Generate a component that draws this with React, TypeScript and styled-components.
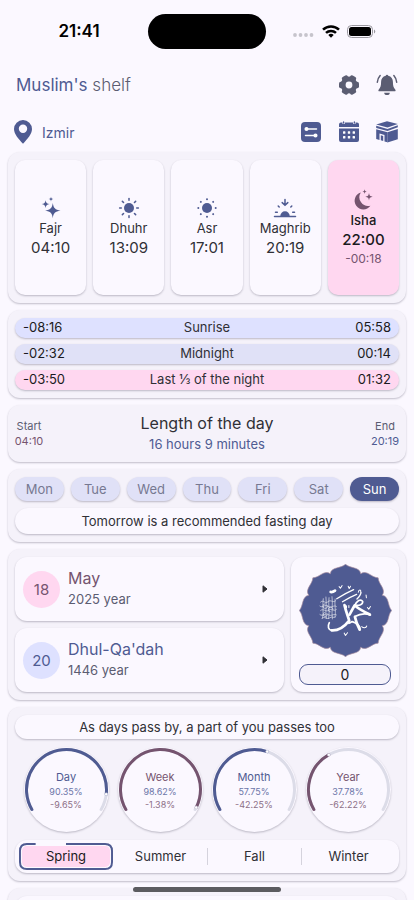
import React, { useState } from "react";
import styled, { createGlobalStyle, css } from "styled-components";

const color = {
  page: "#fbf8ff",
  panel: "#f5f2fa",
  card: "#fbf8ff",
  indigo: "#4f5b92",
  plum: "#75546f",
  lilac: "#dee1ff",
  mist: "#e0e1f7",
  pink: "#ffd7f0",
  ink: "#303036",
  slate: "#5b5d72",
  track: "#dcdce8",
};

const GlobalStyle = createGlobalStyle`
  * { box-sizing: border-box; }
  body {
    margin: 0;
    background: ${color.page};
    color: ${color.ink};
    font-family: Inter, "Open Sans", "Liberation Sans", sans-serif;
  }
  button { font: inherit; color: inherit; border: 0; background: none; padding: 0; cursor: pointer; }
  h1, h2, p, ul { margin: 0; padding: 0; font-weight: 400; }
  ul { list-style: none; }
  svg { display: block; }
`;

const Screen = styled.div`
  height: 100vh;
  overflow: hidden;
  display: flex;
  flex-direction: column;
`;

const StatusBar = styled.header`
  flex: none;
  display: grid;
  grid-template-columns: 1fr 118px 1fr;
  align-items: center;
  height: 62px;
`;

const Clock = styled.time`
  justify-self: center;
  padding-left: 10px;
  color: #000;
  font-size: 17px;
  font-weight: 600;
`;

const Island = styled.div`
  height: 35px;
  border-radius: 18px;
  background: #000;
`;

const Signals = styled.div`
  display: flex;
  justify-content: flex-end;
  align-items: center;
  gap: 7px;
  padding-right: 38px;
`;

const Heading = styled.div<{ $place?: boolean }>`
  flex: none;
  display: flex;
  align-items: center;
  justify-content: space-between;
  height: ${(p) => (p.$place ? 44 : 46)}px;
  padding: ${(p) => (p.$place ? 4 : 0)}px 15px 0 16px;
`;

const Brand = styled.h1`
  font-size: 17px;
  line-height: 24px;
  color: ${color.slate};
  font-weight: 300;

  strong { color: ${color.indigo}; font-weight: 400; }
`;

const City = styled.button`
  display: flex;
  align-items: center;
  gap: 10px;
  margin-left: -2px;
  color: ${color.indigo};
  font-size: 14px;
`;

const Actions = styled.div`
  display: flex;
  gap: 14px;
`;

const IconButton = styled.button<{ $muted?: boolean }>`
  width: 24px;
  height: 24px;
  color: ${(p) => (p.$muted ? color.slate : color.indigo)};
`;

const Panels = styled.main`
  flex: none;
  display: flex;
  flex-direction: column;
  gap: 7px;
  padding: 0 8px;
`;

const raised = css`
  box-shadow: 0 1px 2px rgba(40, 36, 60, 0.28);
`;

const Panel = styled.section<{ $tight?: boolean }>`
  display: flex;
  flex-direction: column;
  gap: ${(p) => (p.$tight ? 6 : 7)}px;
  padding: 8px 7px;
  border-radius: 12px;
  background: ${color.panel};
  ${raised}
`;

const PrayerList = styled.ul`
  display: grid;
  grid-template-columns: repeat(5, 1fr);
  gap: 7px;
`;

const PrayerCard = styled.li<{ $active?: boolean }>`
  display: flex;
  flex-direction: column;
  align-items: center;
  justify-content: center;
  height: 135px;
  border-radius: 10px;
  background: ${(p) => (p.$active ? color.pink : color.card)};
  color: ${(p) => (p.$active ? "#1b1b21" : color.ink)};
  ${raised}

  svg { color: ${(p) => (p.$active ? color.plum : color.indigo)}; }
`;

const PrayerName = styled.span<{ $active?: boolean }>`
  font-size: 13px;
  line-height: 17px;
  font-weight: ${(p) => (p.$active ? 500 : 400)};
`;

const PrayerTime = styled.time<{ $active?: boolean }>`
  font-size: 15px;
  line-height: 22px;
  font-weight: ${(p) => (p.$active ? 500 : 400)};
`;

const Countdown = styled.span`
  font-size: 12px;
  line-height: 16px;
  color: ${color.plum};
`;

const Moment = styled.div<{ $tone: string }>`
  display: grid;
  grid-template-columns: 1fr auto 1fr;
  align-items: center;
  height: 20px;
  padding: 0 8px;
  border-radius: 10px;
  background: ${(p) => p.$tone};
  font-size: 13px;
  line-height: 16px;
  padding-bottom: 2px;
  color: ${color.ink};
  ${raised}

  b { font-weight: 400; color: #1b1b21; }
  b:last-child { text-align: right; }
`;

const DayLength = styled(Panel)`
  flex-direction: row;
  align-items: center;
  justify-content: space-between;
  gap: 0;
  height: 57px;
`;

const Edge = styled.div<{ $tone: string }>`
  width: 40px;
  margin: 0 -6px;
  text-align: center;
  font-size: 11px;
  line-height: 15px;
  color: ${color.slate};

  time { display: block; color: ${(p) => p.$tone}; }
`;

const LengthText = styled.div`
  text-align: center;

  h2 { font-size: 16px; line-height: 21px; }
  p { font-size: 13px; line-height: 21px; color: ${color.indigo}; }
`;

const Week = styled.div`
  display: grid;
  grid-template-columns: repeat(7, 1fr);
  gap: 7px;
`;

const DayChip = styled.button<{ $active: boolean }>`
  height: 24px;
  border-radius: 12px;
  font-size: 13px;
  background: ${(p) => (p.$active ? color.indigo : color.mist)};
  color: ${(p) => (p.$active ? "#fff" : "#777992")};
  ${raised}
`;

const Note = styled.p<{ $slim?: boolean }>`
  padding: ${(p) => (p.$slim ? 2 : 3)}px 8px;
  border-radius: 13px;
  background: ${color.card};
  text-align: center;
  font-size: 13px;
  line-height: 20px;
  ${raised}
`;

const DatePanel = styled(Panel)`
  display: grid;
  grid-template-columns: 1fr 108px;
`;

const Dates = styled.div`
  display: flex;
  flex-direction: column;
  gap: 7px;
`;

const DateCard = styled.button`
  display: flex;
  align-items: center;
  gap: 8px;
  height: 64px;
  padding: 0 16px 0 8px;
  border-radius: 12px;
  background: ${color.card};
  text-align: left;
  ${raised}
`;

const DayBadge = styled.span<{ $tone: string; $ink: string }>`
  display: grid;
  place-items: center;
  width: 37px;
  height: 37px;
  border-radius: 50%;
  font-size: 15px;
  background: ${(p) => p.$tone};
  color: ${(p) => p.$ink};
`;

const DateText = styled.span<{ $ink: string }>`
  flex: 1;
  font-size: 16px;
  line-height: 21px;
  color: ${(p) => p.$ink};

  small { display: block; font-size: 13px; color: ${color.slate}; }
`;

const CounterCard = styled.div`
  display: flex;
  flex-direction: column;
  align-items: center;
  justify-content: space-between;
  padding: 7px 8px;
  border-radius: 12px;
  background: ${color.card};
  ${raised}
`;

const Counter = styled.button`
  width: 100%;
  height: 21px;
  border: 1px solid ${color.indigo};
  border-radius: 9px;
  background: ${color.panel};
  font-size: 14px;
  line-height: 19px;
  color: #1b1b21;
`;

const Gauges = styled.div`
  display: grid;
  grid-template-columns: repeat(4, 1fr);
  justify-items: center;
  padding: 1px 4px;
`;

const GaugeDial = styled.div`
  display: grid;
  width: 85px;
  height: 85px;
  border-radius: 50%;
  background: ${color.card};
  ${raised}

  > * { grid-area: 1 / 1; }
`;

const GaugeText = styled.div<{ $ink: string }>`
  align-self: center;
  text-align: center;
  font-size: 11px;
  line-height: 16px;
  color: ${(p) => p.$ink};

  p { font-size: 9px; line-height: 13px; color: #6b75a8; }
  p:last-child { color: #8d6f87; }
`;

const Seasons = styled.div`
  display: grid;
  grid-template-columns: repeat(4, 1fr);
  align-items: center;
  height: 33px;
  padding: 0 4px;
  border-radius: 12px;
  background: ${color.card};
  ${raised}
`;

const Season = styled.button<{ $divided?: boolean }>`
  height: 17px;
  font-size: 13px;
  line-height: 17px;
  border-left: 1px solid ${(p) => (p.$divided ? "#d5d3dd" : "transparent")};
`;

const ActiveSeason = styled.button`
  display: grid;
  height: 27px;
  font-size: 13px;
  line-height: 17px;
  color: #1b1b21;

  > * { grid-area: 1 / 1; }
  svg { width: 100%; height: 27px; }
  span { align-self: center; }
`;

const NextPanel = styled(Panel)`
  height: 80px;
`;

const NextCard = styled.div`
  height: 60px;
  border-radius: 12px;
  background: ${color.card};
  ${raised}
`;

const HomeIndicator = styled.div`
  position: fixed;
  left: 50%;
  bottom: 8px;
  width: 148px;
  height: 5px;
  margin-left: -74px;
  border-radius: 3px;
  background: #5c5c60;
`;

const rays = (count: number) => Array.from({ length: count }, (_, i) => (i * 360) / count);

const Gear = () => (
  <svg viewBox="0 0 24 24" width="24" height="24" fill="currentColor">
    <circle cx="12" cy="12" r="5.900" fill="none" stroke="currentColor" strokeWidth="5" />
    {rays(6).map((a) => (
      <rect key={a} x="17" y="8.700" width="5" height="6.600" rx="1.800" transform={`rotate(${a} 12 12)`} />
    ))}
  </svg>
);

const Bell = () => (
  <svg viewBox="-1 -.5 26 26" width="24" height="24" fill="currentColor">
    <path d="M10.600 2.400a1.500 1.500 0 0 1 2.800 0c3.200.8 5 3.400 5 6.600 0 4.400.7 6.500 2.500 8.300.8.9.5 2-.7 2H3.800c-1.200 0-1.500-1.100-.7-2C4.900 15.500 5.600 13.400 5.600 9c0-3.200 1.800-5.800 5-6.600z" />
    <path d="M9 20.800h6a3 2.600 0 0 1-6 0z" />
    <path d="M4.600 2.200C2.800 4.200 1.700 6.700 1.500 9.600M19.400 2.200c1.800 2 2.900 4.500 3.100 7.400" fill="none" stroke="currentColor" strokeWidth="1.600" strokeLinecap="round" />
  </svg>
);

const Pin = () => (
  <svg viewBox="0 0 18 24" width="18" height="24" fill="currentColor">
    <path fillRule="evenodd" d="M9 0a9 9 0 0 1 9 9c0 5-4.500 9.800-9 14.800C4.500 18.800 0 14 0 9a9 9 0 0 1 9-9zm0 4.600a4.200 4.200 0 1 0 0 8.400 4.200 4.200 0 0 0 0-8.400z" />
  </svg>
);

const Sliders = () => (
  <svg viewBox="0 0 24 24" width="24" height="24">
    <rect x="2" y="2" width="20" height="20" rx="4" fill="currentColor" />
    <g stroke="#fff" strokeWidth="1.500" strokeLinecap="round" fill="#fff">
      <path d="M8 9h9.500M6.500 15.500H16" />
      <circle cx="7.500" cy="9" r="1.300" />
      <circle cx="16.500" cy="15.500" r="1.300" />
    </g>
  </svg>
);

const CalendarGrid = () => (
  <svg viewBox="0 0 24 24" width="24" height="24">
    <path fill="currentColor" d="M2 7V4.500A2 2 0 0 1 4 2.500h1.500V4h2.300V2.500h8.400V4h2.300V2.500H20a2 2 0 0 1 2 2V7zM2 8.500h20V20a2 2 0 0 1-2 2H4a2 2 0 0 1-2-2z" />
    <path fill="none" stroke="currentColor" strokeWidth="1.300" strokeLinecap="round" d="M6.600 2v1M17.400 2v1" />
    <g fill="#fff">
      {[6, 10.800, 15.600].map((x) =>
        [11.300, 16].map((y) => <rect key={`${x}-${y}`} x={x} y={y} width="2.400" height="2.400" rx=".5" />)
      )}
    </g>
  </svg>
);

const Kaaba = () => (
  <svg viewBox="0 0 24 24" width="24" height="24" fill="currentColor">
    <path d="M12 1.300 22.800 4 12.500 7.600 1.200 4.500z" />
    <path d="M1.200 5.800 12.500 8.900 22.800 5.300v2L12.500 11 1.200 7.900z" />
    <path d="M1.200 9.200 12.500 12.300v10l-3-.9v-6.300l-5-1.500v6.300l-3.300-1z" />
    <path d="m5.800 15.300 2.400.7v5l-2.400-.7zM12.400 12.300l10.400-3.300v10.300l-10.400 3.200z" />
  </svg>
);

const Sparkles = () => (
  <svg viewBox="0 0 24 24" width="24" height="24" fill="currentColor">
    <path d="M13.800 7c.8 5.200 2.200 6.600 7.700 7.600-5.500 1-6.900 2.400-7.700 7.600-.8-5.200-2.200-6.600-7.700-7.600 5.500-1 6.900-2.400 7.700-7.600z" />
    <path d="M6.600 4.200c.5 2.700 1.200 3.400 4 3.900-2.800.5-3.500 1.200-4 3.900-.5-2.700-1.200-3.400-4-3.900 2.800-.5 3.500-1.200 4-3.900zM12 .800c.3 1.600.8 2 2.400 2.300-1.600.3-2.100.7-2.400 2.300-.3-1.600-.8-2-2.400-2.300 1.600-.3 2.100-.7 2.400-2.300z" />
  </svg>
);

const Sun = () => (
  <svg viewBox="0 0 24 24" width="24" height="24">
    <circle cx="12" cy="12" r="5" fill="currentColor" />
    {rays(8).map((a) => (
      <path key={a} d="M12 2.600v1.700" transform={`rotate(${a} 12 12)`} stroke="currentColor" strokeWidth="1.500" strokeLinecap="round" />
    ))}
  </svg>
);

const AfternoonSun = () => (
  <svg viewBox="0 0 24 24" width="24" height="24" fill="currentColor">
    <circle cx="12" cy="12" r="5" />
    {rays(8).map((a) => (
      <circle key={a} cx="12" cy="3.300" r="1" transform={`rotate(${a} 12 12)`} />
    ))}
  </svg>
);

const Sunset = () => (
  <svg viewBox="0 0 24 24" width="24" height="24" stroke="currentColor" strokeWidth="1.500" strokeLinecap="round" fill="none">
    <path d="M7.300 20a4.700 4.700 0 1 1 9.400 0z" fill="currentColor" stroke="none" />
    <path d="M1.500 20.600h21M12 3.500v5.500M9.200 6.600 12 9.300l2.800-2.700M5.200 10l1 1M18.800 10l-1 1M2.500 16.200h1.800M19.700 16.200h1.800" />
  </svg>
);

const MoonStars = () => (
  <svg viewBox="0 0 24 24" width="24" height="24" fill="currentColor">
    <path d="M9.800 4.400A8.700 8.700 0 1 0 19.400 17.800 8.900 8.900 0 0 1 9.800 4.400z" />
    <path d="M18 5c.4 2.600 1 3.200 3.700 3.700-2.700.5-3.300 1.100-3.700 3.700-.4-2.600-1-3.200-3.700-3.700C17 8.200 17.600 7.600 18 5zM13.600 1.300c.3 1.700.7 2 2.200 2.300-1.500.3-1.900.7-2.200 2.300-.3-1.600-.7-2-2.200-2.300 1.500-.3 1.900-.6 2.200-2.300z" />
  </svg>
);

const SignalIcons = () => (
  <Signals aria-label="Signal and battery">
    <svg viewBox="0 0 22 12" width="22" height="12" fill="#c6c4cc">
      {[2, 7.500, 13, 18.500].map((x) => (
        <circle key={x} cx={x} cy="10" r="1.900" />
      ))}
    </svg>
    <svg viewBox="0 0 18 13" width="18" height="13" fill="none" stroke="#000" strokeWidth="2.500">
      <path d="M1 4.600a11.600 11.600 0 0 1 16 0M4 7.900a7.200 7.200 0 0 1 10 0" />
      <path d="M9 12.700 6.300 10a3.900 3.900 0 0 1 5.400 0z" fill="#000" stroke="none" />
    </svg>
    <svg viewBox="0 0 29 13" width="29" height="13">
      <rect x=".5" y=".5" width="25" height="12" rx="4" fill="none" stroke="#9b99a0" />
      <rect x="2" y="2" width="22" height="9" rx="2.500" fill="#000" />
      <path d="M27 4.500v4a2.200 2.200 0 0 0 0-4z" fill="#9b99a0" />
    </svg>
  </Signals>
);

const polar = (r: number, deg: number) => {
  const a = ((deg - 90) * Math.PI) / 180;
  return `${(138 + r * Math.cos(a)).toFixed(1)} ${(138 + r * Math.sin(a)).toFixed(1)}`;
};

const petals =
  `M${polar(137, 0)}` +
  rays(8)
    .map(
      (a) =>
        `C${polar(125, a + 6)} ${polar(137, a + 18)} ${polar(118, a + 22.5)}` +
        `C${polar(137, a + 27)} ${polar(125, a + 39)} ${polar(137, a + 45)}`
    )
    .join("") +
  "Z";

const Emblem = () => (
  <svg viewBox="0 0 276 276" width="93" height="93" role="img" aria-label="Calligraphy medallion">
    <path d={petals} fill={color.indigo} stroke="#a58a9c" strokeWidth="2" />
    <g fill="none" stroke="#fff" strokeLinecap="round" strokeLinejoin="round">
      <path strokeWidth="8" d="M135 122c4 18 10 32 14 46-14 18-34 30-52 29" />
      <path strokeWidth="5" d="M97 197c-10-1-13-12-7-23M164 125c8-16 19-23 25-14 1 9-11 14-21 11M166 156c14-8 30-10 46-5" />
      <path strokeWidth="8" d="M150 150c5-9 9-17 15-27 14 11 29 19 45 27M166 157c3 14 8 26 14 38" />
      <path strokeWidth="5" d="M180 195c4-8-8-20-22-24-4 2-7 4-10 5" />
      <path strokeWidth="4" d="M112 103c16-10 32-19 50-27M129 112c13-8 27-16 42-22M172 104c8-8 12-14 12-20" />
      <path strokeWidth="8" d="M94 83c5 1 9-1 13-4" />
      <path strokeWidth="3" d="M119 67l4 5 5-8M146 66l3 7 4-7M176 84c1-9 9-9 7-1M199 92l1 8M203 129l4 5 5-8M186 186c5 4 13 5 15-2M134 205l4 7 6-8M141 130v-6M148 129v-6" />
      <g strokeWidth="2" opacity=".85">
        <path d="M72 103c-3 20 2 38-2 58M80 98c3 22-3 42 1 64M89 100c-3 20 3 36-1 62M98 97c3 22-2 40 1 66M107 104c-2 18 3 34 0 54" />
        <path d="M64 113c8-9 14 7 22-1s14 5 23-3M62 125c9 8 15-8 24 0s16-5 25 1M64 138c8-8 16 6 24-1s14 6 23-2M62 150c9 8 17-7 25 0s15-4 24 1M68 161c9-7 16 5 23-1s12 2 17-3" />
        <path d="M77 118a7 7 0 1 0 8 7M93 142a7 7 0 1 1 8-7M76 144a6 6 0 1 0 8 6" />
      </g>
    </g>
  </svg>
);

const arc = (fraction: number) => {
  const a = ((150 + 240 * fraction) * Math.PI) / 180;
  return { x: 42.5 + 40 * Math.cos(a), y: 42.5 + 40 * Math.sin(a) };
};

const arcPath = (fraction: number) => {
  const from = arc(0);
  const to = arc(fraction);
  return `M${from.x} ${from.y}A40 40 0 ${fraction * 240 > 180 ? 1 : 0} 1 ${to.x} ${to.y}`;
};

type GaugeProps = { label: string; value: number; ink: string };

const Gauge = ({ label, value, ink }: GaugeProps) => {
  const end = arc(value / 100);
  return (
    <GaugeDial>
      <svg viewBox="0 0 85 85" width="85" height="85" fill="none" strokeLinecap="round" aria-hidden="true">
        <path d={arcPath(1)} stroke={color.track} strokeWidth="3" />
        <path d={arcPath(value / 100)} stroke={ink} strokeWidth="3" />
        <circle cx={end.x} cy={end.y} r="1.500" fill="#fff" stroke="#c9c8dc" strokeWidth=".5" />
      </svg>
      <GaugeText $ink={ink}>
        {label}
        <p>{value.toFixed(2)}%</p>
        <p>-{(100 - value).toFixed(2)}%</p>
      </GaugeText>
    </GaugeDial>
  );
};

const Caret = () => (
  <svg viewBox="0 0 6 8" width="6" height="8" fill={color.ink} aria-hidden="true">
    <path d="M1 .8 5 4 1 7.200z" stroke={color.ink} strokeLinejoin="round" />
  </svg>
);

const prayers = [
  { name: "Fajr", time: "04:10", Icon: Sparkles },
  { name: "Dhuhr", time: "13:09", Icon: Sun },
  { name: "Asr", time: "17:01", Icon: AfternoonSun },
  { name: "Maghrib", time: "20:19", Icon: Sunset },
  { name: "Isha", time: "22:00", Icon: MoonStars, left: "-00:18" },
];

const moments = [
  { name: "Sunrise", left: "-08:16", time: "05:58", tone: color.lilac },
  { name: "Midnight", left: "-02:32", time: "00:14", tone: color.mist },
  { name: "Last ⅓ of the night", left: "-03:50", time: "01:32", tone: color.pink },
];

const weekdays = ["Mon", "Tue", "Wed", "Thu", "Fri", "Sat", "Sun"];

const dates = [
  { day: 18, month: "May", year: "2025 year", tone: color.pink, ink: color.plum },
  { day: 20, month: "Dhul-Qa'dah", year: "1446 year", tone: color.lilac, ink: color.indigo },
];

const gauges: GaugeProps[] = [
  { label: "Day", value: 90.35, ink: color.indigo },
  { label: "Week", value: 98.62, ink: color.plum },
  { label: "Month", value: 57.75, ink: color.indigo },
  { label: "Year", value: 37.78, ink: color.plum },
];

export default function App() {
  const [day, setDay] = useState("Sun");
  const [count, setCount] = useState(0);

  return (
    <Screen>
      <GlobalStyle />
      <StatusBar>
        <Clock>21:41</Clock>
        <Island />
        <SignalIcons />
      </StatusBar>

      <Heading>
        <Brand>
          <strong>Muslim's</strong> shelf
        </Brand>
        <Actions>
          <IconButton $muted aria-label="Settings"><Gear /></IconButton>
          <IconButton $muted aria-label="Notifications"><Bell /></IconButton>
        </Actions>
      </Heading>
      <Heading $place>
        <City>
          <Pin />
          Izmir
        </City>
        <Actions>
          <IconButton aria-label="Adjustments"><Sliders /></IconButton>
          <IconButton aria-label="Calendar"><CalendarGrid /></IconButton>
          <IconButton aria-label="Qibla"><Kaaba /></IconButton>
        </Actions>
      </Heading>

      <Panels>
        <Panel>
          <PrayerList>
            {prayers.map(({ name, time, Icon, left }) => (
              <PrayerCard key={name} $active={!!left}>
                <Icon />
                <PrayerName $active={!!left}>{name}</PrayerName>
                <PrayerTime $active={!!left}>{time}</PrayerTime>
                {left && <Countdown>{left}</Countdown>}
              </PrayerCard>
            ))}
          </PrayerList>
        </Panel>

        <Panel $tight>
          {moments.map((m) => (
            <Moment key={m.name} $tone={m.tone}>
              <b>{m.left}</b>
              <span>{m.name}</span>
              <b>{m.time}</b>
            </Moment>
          ))}
        </Panel>

        <DayLength>
          <Edge $tone={color.plum}>
            Start
            <time>04:10</time>
          </Edge>
          <LengthText>
            <h2>Length of the day</h2>
            <p>16 hours 9 minutes</p>
          </LengthText>
          <Edge $tone={color.indigo}>
            End
            <time>20:19</time>
          </Edge>
        </DayLength>

        <Panel>
          <Week>
            {weekdays.map((d) => (
              <DayChip key={d} $active={d === day} onClick={() => setDay(d)}>
                {d}
              </DayChip>
            ))}
          </Week>
          <Note>Tomorrow is a recommended fasting day</Note>
        </Panel>

        <DatePanel>
          <Dates>
            {dates.map((d) => (
              <DateCard key={d.month}>
                <DayBadge $tone={d.tone} $ink={d.ink}>{d.day}</DayBadge>
                <DateText $ink={d.ink}>
                  {d.month}
                  <small>{d.year}</small>
                </DateText>
                <Caret />
              </DateCard>
            ))}
          </Dates>
          <CounterCard>
            <Emblem />
            <Counter aria-label="Counter" onClick={() => setCount(count + 1)}>{count}</Counter>
          </CounterCard>
        </DatePanel>

        <Panel>
          <Note $slim>As days pass by, a part of you passes too</Note>
          <Gauges>
            {gauges.map((g) => (
              <Gauge key={g.label} {...g} />
            ))}
          </Gauges>
          <Seasons>
            <ActiveSeason>
              <svg viewBox="0 0 96 27" preserveAspectRatio="none" fill="none" aria-hidden="true">
                <rect x="3" y="3" width="90" height="21" rx="5" fill={color.pink} />
                <path d="M17 1H8Q1 1 1 8v11q0 7 7 7h80q7 0 7-7V8q0-7-7-7H48" stroke={color.indigo} strokeWidth="2" />
              </svg>
              <span>Spring</span>
            </ActiveSeason>
            <Season>Summer</Season>
            <Season $divided>Fall</Season>
            <Season $divided>Winter</Season>
          </Seasons>
        </Panel>

        <NextPanel>
          <NextCard />
        </NextPanel>
      </Panels>
      <HomeIndicator />
    </Screen>
  );
}
